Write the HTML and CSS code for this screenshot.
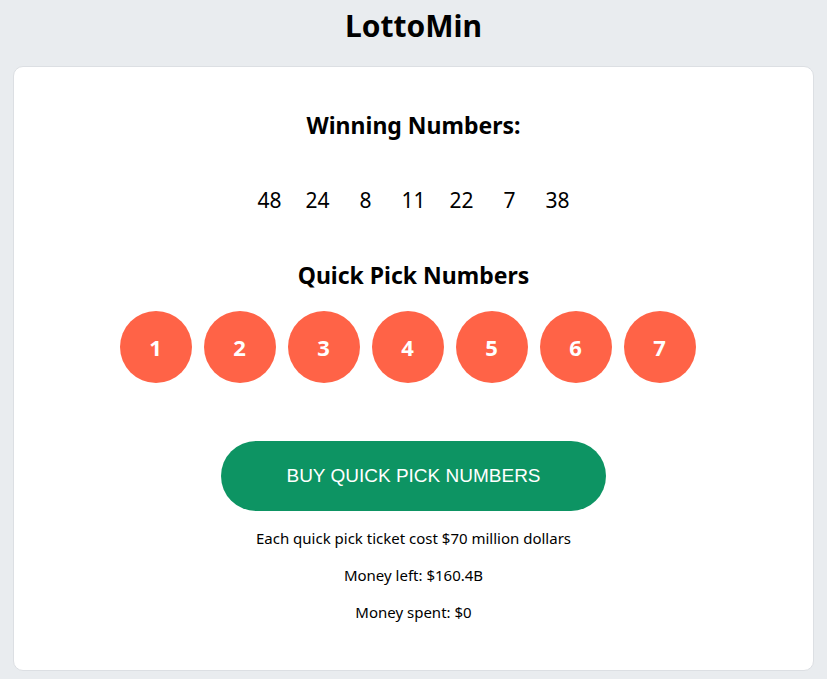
FILE: index.html
```html
<!DOCTYPE html>
<html lang="en">
<head>
<meta charset="utf-8">
<title>LottoMin</title>
<link rel="stylesheet" href="styles.css">
</head>
<body>
<h1 class="title">LottoMin</h1>
<main class="card">
  <h2 class="heading heading-win">Winning Numbers:</h2>
  <div class="winning">
    <span class="num">48</span>
    <span class="num">24</span>
    <span class="num">8</span>
    <span class="num">11</span>
    <span class="num">22</span>
    <span class="num">7</span>
    <span class="num">38</span>
  </div>
  <h2 class="heading heading-quick">Quick Pick Numbers</h2>
  <div class="balls">
    <span class="ball">1</span>
    <span class="ball">2</span>
    <span class="ball">3</span>
    <span class="ball">4</span>
    <span class="ball">5</span>
    <span class="ball">6</span>
    <span class="ball">7</span>
  </div>
  <button class="buy">BUY QUICK PICK NUMBERS</button>
  <p class="info">Each quick pick ticket cost $70 million dollars</p>
  <p class="info">Money left: $160.4B</p>
  <p class="info">Money spent: $0</p>
</main>
</body>
</html>
```
FILE: styles.css
```css
html, body {
  margin: 0;
  padding: 0;
}
body {
  background: #e9ecef;
  font-family: "Noto Sans", "Open Sans", sans-serif;
  color: #000;
  height: 679px;
  overflow: hidden;
}
.title {
  margin: 0;
  padding: 6px 0 0;
  height: 66px;
  box-sizing: border-box;
  text-align: center;
  font-size: 30px;
  font-weight: 700;
  line-height: 40px;
}
.card {
  margin: 0 13px;
  background: #fff;
  border: 1px solid #dcdfe3;
  border-radius: 10px;
  height: 605px;
  box-sizing: border-box;
  display: flex;
  flex-direction: column;
  align-items: center;
  padding-top: 40px;
}
.heading {
  margin: 0;
  font-size: 23px;
  font-weight: 700;
  line-height: 36px;
}
.winning {
  display: flex;
  margin-top: 39px;
  height: 36px;
  align-items: center;
}
.num {
  width: 48px;
  text-align: center;
  font-size: 21px;
}
.heading-quick {
  margin-top: 39px;
}
.balls {
  display: flex;
  margin-top: 18px;
}
.ball {
  width: 72px;
  height: 72px;
  border-radius: 50%;
  background: #ff6347;
  color: #fff;
  font-weight: 700;
  font-size: 22px;
  display: flex;
  align-items: center;
  justify-content: center;
  margin-right: 12px;
}
.buy {
  margin-top: 58px;
  width: 385px;
  height: 70px;
  border: none;
  border-radius: 35px;
  background: #0d9463;
  color: #fff;
  font-family: "Liberation Sans", Arial, sans-serif;
  font-size: 19px;
  cursor: pointer;
}
.info {
  margin: 17px 0 0;
  font-size: 15px;
  line-height: 21px;
}
.info + .info {
  margin-top: 16px;
}
```
